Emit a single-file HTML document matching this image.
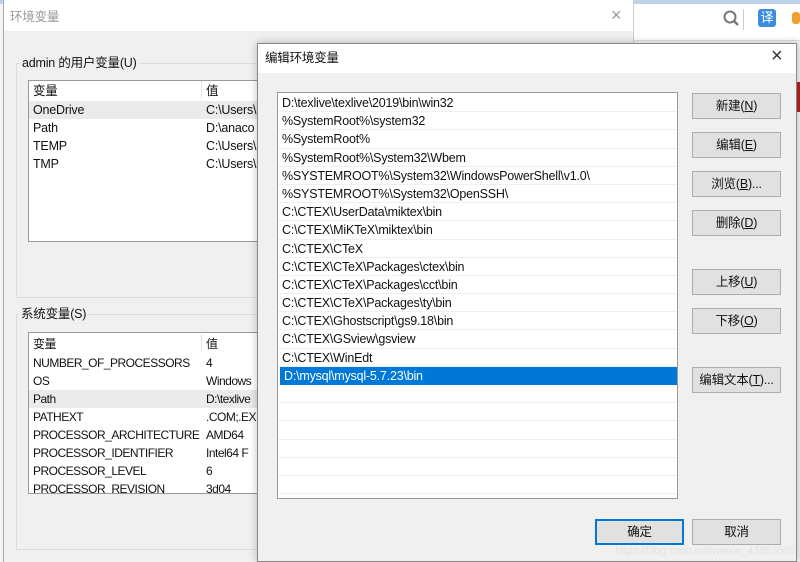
<!DOCTYPE html>
<html><head><meta charset="utf-8"><style>
*{margin:0;padding:0;box-sizing:border-box}
body{width:800px;height:562px;overflow:hidden;position:relative;background:#f4f4f4;font-family:"Liberation Sans","Noto Sans CJK SC",sans-serif;font-size:12.5px;color:#111;letter-spacing:-0.2px}
.a{position:absolute}
.t{position:absolute;white-space:nowrap;line-height:18px}
.btn{position:absolute;width:89px;height:26px;background:#e1e1e1;border:1px solid #adadad;text-align:center;line-height:24px;font-size:12.5px}
.sys .t{font-size:12px;letter-spacing:-0.5px}
</style></head><body>
<div class="a" style="left:0;top:0;width:800px;height:4px;background:#bcd3ea"></div>
<div class="a" style="left:634px;top:4px;width:166px;height:36px;background:#fff"></div>
<div class="a" style="left:634px;top:40px;width:166px;height:1px;background:#ddd"></div>
<svg class="a" style="left:722px;top:9px" width="20" height="20"><circle cx="8" cy="8" r="5.5" fill="none" stroke="#777" stroke-width="2"/><line x1="12" y1="12" x2="16" y2="16" stroke="#777" stroke-width="2.4"/></svg>
<div class="a" style="left:743px;top:9px;width:1px;height:21px;background:#ccc"></div>
<div class="a" style="left:758px;top:9px;width:18px;height:18px;background:#3b8de0;border-radius:3px;color:#fff;font-size:13px;line-height:18px;text-align:center">译</div>
<div class="a" style="left:792px;top:12px;width:8px;height:12px;background:#f0a030;border-radius:3px"></div>
<div class="a" style="left:796px;top:82px;width:4px;height:30px;background:#b52020"></div>
<div class="a" style="left:3px;top:0;width:631px;height:562px;background:#f0f0f0;border-left:1px solid #aaa;border-right:1px solid #ccc"></div>
<div class="a" style="left:4px;top:0;width:629px;height:31px;background:#fff"></div>
<div class="t" style="left:10px;top:8px;color:#999;font-size:12.5px">环境变量</div>
<div class="t" style="left:611px;top:6px;color:#999;font-size:18px">×</div>
<div class="a" style="left:16px;top:63px;width:620px;height:235px;border:1px solid #dcdcdc"></div>
<div class="t" style="left:20px;top:54px;background:#f0f0f0;padding:0 2px">admin 的用户变量(U)</div>
<div class="a" style="left:28px;top:80px;width:240px;height:162px;background:#fff;border:1px solid #999"></div>
<div class="a" style="left:201px;top:81px;width:1px;height:18px;background:#e5e5e5"></div>
<div class="t" style="left:33px;top:82px">变量</div><div class="t" style="left:206px;top:82px">值</div>
<div class="a" style="left:29px;top:101px;width:240px;height:18px;background:#ebebeb"></div>
<div class="t" style="left:33px;top:101px">OneDrive</div><div class="t" style="left:206px;top:101px">C:\Users\</div>
<div class="t" style="left:33px;top:119px">Path</div><div class="t" style="left:206px;top:119px">D:\anaco</div>
<div class="t" style="left:33px;top:137px">TEMP</div><div class="t" style="left:206px;top:137px">C:\Users\</div>
<div class="t" style="left:33px;top:155px">TMP</div><div class="t" style="left:206px;top:155px">C:\Users\</div>
<div class="a" style="left:16px;top:314px;width:620px;height:236px;border:1px solid #dcdcdc"></div>
<div class="t" style="left:19px;top:305px;background:#f0f0f0;padding:0 2px">系统变量(S)</div>
<div class="a sys" style="left:28px;top:332px;width:240px;height:162px;background:#fff;border:1px solid #999;overflow:hidden">
<div class="a" style="left:172px;top:1px;width:1px;height:18px;background:#e5e5e5"></div>
<div class="t" style="left:4px;top:2px">变量</div><div class="t" style="left:177px;top:2px">值</div>
<div class="a" style="left:0;top:57px;width:240px;height:18px;background:#ebebeb"></div>
<div class="t" style="left:4px;top:21px">NUMBER_OF_PROCESSORS</div><div class="t" style="left:177px;top:21px">4</div>
<div class="t" style="left:4px;top:39px">OS</div><div class="t" style="left:177px;top:39px">Windows</div>
<div class="t" style="left:4px;top:57px">Path</div><div class="t" style="left:177px;top:57px">D:\texlive</div>
<div class="t" style="left:4px;top:75px">PATHEXT</div><div class="t" style="left:177px;top:75px">.COM;.EX</div>
<div class="t" style="left:4px;top:93px">PROCESSOR_ARCHITECTURE</div><div class="t" style="left:177px;top:93px">AMD64</div>
<div class="t" style="left:4px;top:111px">PROCESSOR_IDENTIFIER</div><div class="t" style="left:177px;top:111px">Intel64 F</div>
<div class="t" style="left:4px;top:129px">PROCESSOR_LEVEL</div><div class="t" style="left:177px;top:129px">6</div>
<div class="t" style="left:4px;top:147px">PROCESSOR_REVISION</div><div class="t" style="left:177px;top:147px">3d04</div>
</div>
<div class="a" style="left:257px;top:43px;width:540px;height:519px;background:#f0f0f0;border:1px solid #888;box-shadow:0 0 8px rgba(0,0,0,.25)"></div>
<div class="a" style="left:258px;top:44px;width:538px;height:29px;background:#fff"></div>
<div class="t" style="left:265px;top:49px">编辑环境变量</div>
<div class="t" style="left:771px;top:47px;font-size:20px;color:#333">×</div>
<div class="a" style="left:277px;top:92px;width:401px;height:407px;background:#fff;border:1px solid #999;overflow:hidden">
<div style="position:absolute;left:0;top:1px;width:399px">
<div style="height:18.2px;border-bottom:1px solid #f0f0f0;padding-left:4px;line-height:18px">D:\texlive\texlive\2019\bin\win32</div>
<div style="height:18.2px;border-bottom:1px solid #f0f0f0;padding-left:4px;line-height:18px">%SystemRoot%\system32</div>
<div style="height:18.2px;border-bottom:1px solid #f0f0f0;padding-left:4px;line-height:18px">%SystemRoot%</div>
<div style="height:18.2px;border-bottom:1px solid #f0f0f0;padding-left:4px;line-height:18px">%SystemRoot%\System32\Wbem</div>
<div style="height:18.2px;border-bottom:1px solid #f0f0f0;padding-left:4px;line-height:18px">%SYSTEMROOT%\System32\WindowsPowerShell\v1.0\</div>
<div style="height:18.2px;border-bottom:1px solid #f0f0f0;padding-left:4px;line-height:18px">%SYSTEMROOT%\System32\OpenSSH\</div>
<div style="height:18.2px;border-bottom:1px solid #f0f0f0;padding-left:4px;line-height:18px">C:\CTEX\UserData\miktex\bin</div>
<div style="height:18.2px;border-bottom:1px solid #f0f0f0;padding-left:4px;line-height:18px">C:\CTEX\MiKTeX\miktex\bin</div>
<div style="height:18.2px;border-bottom:1px solid #f0f0f0;padding-left:4px;line-height:18px">C:\CTEX\CTeX</div>
<div style="height:18.2px;border-bottom:1px solid #f0f0f0;padding-left:4px;line-height:18px">C:\CTEX\CTeX\Packages\ctex\bin</div>
<div style="height:18.2px;border-bottom:1px solid #f0f0f0;padding-left:4px;line-height:18px">C:\CTEX\CTeX\Packages\cct\bin</div>
<div style="height:18.2px;border-bottom:1px solid #f0f0f0;padding-left:4px;line-height:18px">C:\CTEX\CTeX\Packages\ty\bin</div>
<div style="height:18.2px;border-bottom:1px solid #f0f0f0;padding-left:4px;line-height:18px">C:\CTEX\Ghostscript\gs9.18\bin</div>
<div style="height:18.2px;border-bottom:1px solid #f0f0f0;padding-left:4px;line-height:18px">C:\CTEX\GSview\gsview</div>
<div style="height:18.2px;border-bottom:1px solid #f0f0f0;padding-left:4px;line-height:18px">C:\CTEX\WinEdt</div>
<div style="height:18.2px;padding-left:4px;line-height:18px;background:#0078d7;color:#fff;margin-left:2px;width:397px">D:\mysql\mysql-5.7.23\bin</div>
<div style="height:18.2px;border-bottom:1px solid #f0f0f0"></div>
<div style="height:18.2px;border-bottom:1px solid #f0f0f0"></div>
<div style="height:18.2px;border-bottom:1px solid #f0f0f0"></div>
<div style="height:18.2px;border-bottom:1px solid #f0f0f0"></div>
<div style="height:18.2px;border-bottom:1px solid #f0f0f0"></div>
<div style="height:18.2px;border-bottom:1px solid #f0f0f0"></div>
</div></div>
<div class="btn" style="left:692px;top:93px">新建(<u>N</u>)</div>
<div class="btn" style="left:692px;top:132px">编辑(<u>E</u>)</div>
<div class="btn" style="left:692px;top:171px">浏览(<u>B</u>)...</div>
<div class="btn" style="left:692px;top:210px">删除(<u>D</u>)</div>
<div class="btn" style="left:692px;top:269px">上移(<u>U</u>)</div>
<div class="btn" style="left:692px;top:308px">下移(<u>O</u>)</div>
<div class="btn" style="left:692px;top:367px">编辑文本(<u>T</u>)...</div>
<div class="btn" style="left:595px;top:519px;border:2px solid #0078d7;line-height:22px">确定</div>
<div class="btn" style="left:692px;top:519px">取消</div>
<div class="t" style="left:615px;top:542px;color:#e2e2e2;font-size:11px">https://blog.csdn.net/weixin_43853605</div>
</body></html>
